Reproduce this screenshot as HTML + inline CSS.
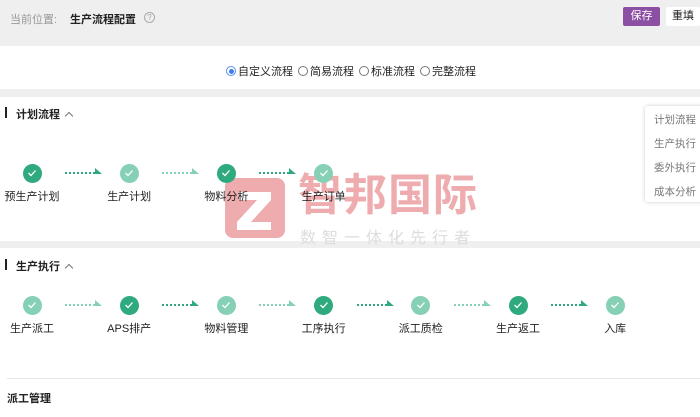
<!DOCTYPE html><html><head><meta charset="utf-8"><style>
*{margin:0;padding:0;box-sizing:border-box}
body{width:700px;height:417px;overflow:hidden;background:#fff;font-family:"Liberation Sans","Noto Sans CJK SC",sans-serif;font-size:11px;color:#222;position:relative}
.a{position:absolute}
.c{position:absolute;width:19px;height:19px;border-radius:50%;display:flex;align-items:center;justify-content:center}
.d{background:#2fa97e}.l{background:#86d0b6}
.lab{position:absolute;width:90px;text-align:center;font-size:11px;color:#222}
.ar{position:absolute;height:2px;width:30px;border-top:2px dotted}
.ah{position:absolute;width:0;height:0;border-left:7px solid;border-top:6px solid transparent}
.m{position:absolute;left:654px;font-size:10.5px;color:#777}
.chev{display:inline-block;width:6px;height:6px;border-left:1.2px solid #777;border-top:1.2px solid #777;transform:rotate(45deg);margin-left:6px;position:relative;top:1px}
</style></head><body>
<div class="a" style="left:0;top:0;width:700px;height:46px;background:#efefef"></div>
<div class="a" style="left:10px;top:11px;font-size:11px;color:#999">当前位置:</div>
<div class="a" style="left:70px;top:11px;font-size:11px;font-weight:bold;color:#222">生产流程配置</div>
<div class="a" style="left:144px;top:12px;width:11px;height:11px;border:1px solid #aaa;border-radius:50%;font-size:8px;color:#aaa;text-align:center;line-height:9px">?</div>
<div class="a" style="left:623px;top:7px;width:37px;height:19px;background:#8b4fa3;border-radius:2px;color:#fff;font-size:11px;text-align:center;line-height:19px">保存</div>
<div class="a" style="left:666px;top:7px;width:34px;height:19px;background:#fff;border-radius:2px;color:#222;font-size:11px;text-align:center;line-height:19px">重填</div>
<div class="a" style="left:0;top:89px;width:700px;height:8px;background:#efefef"></div>
<div class="a" style="left:226px;top:63px;font-size:11px;color:#222;display:flex;align-items:center;gap:0">
<span style="width:10px;height:10px;border-radius:50%;border:1px solid #5b8def;display:inline-block;position:relative;margin-right:2px"><span style="position:absolute;left:1.5px;top:1.5px;width:5px;height:5px;border-radius:50%;background:#3f7cf0"></span></span>自定义流程
<span style="width:10px;height:10px;border-radius:50%;border:1px solid #777;display:inline-block;margin:0 2px 0 5px"></span>简易流程
<span style="width:10px;height:10px;border-radius:50%;border:1px solid #777;display:inline-block;margin:0 2px 0 5px"></span>标准流程
<span style="width:10px;height:10px;border-radius:50%;border:1px solid #777;display:inline-block;margin:0 2px 0 5px"></span>完整流程</div>
<div class="a" style="left:5px;top:107px;width:2px;height:11px;background:#222"></div>
<div class="a" style="left:16px;top:106px;font-weight:bold">计划流程<span class="chev"></span></div>
<div class="a" style="left:0;top:241px;width:700px;height:7px;background:#efefef"></div>
<div class="a" style="left:5px;top:259px;width:2px;height:11px;background:#222"></div>
<div class="a" style="left:16px;top:258px;font-weight:bold">生产执行<span class="chev"></span></div>
<div class="a" style="left:7px;top:378px;width:693px;height:1px;background:#e6e6e6"></div>
<div class="a" style="left:7px;top:390px;font-weight:bold">派工管理</div>
<!-- watermark -->
<div class="a" style="left:225px;top:178px;width:60px;height:60px;background:#eeacaf;border-radius:8px"></div>
<svg class="a" style="left:225px;top:178px" width="60" height="60"><path d="M14 14h32v8L26 44h20v8H12v-8l20-22H14z" fill="#fff"/></svg>
<div class="a" style="left:298px;top:171px;font-size:44px;color:#eeacaf;letter-spacing:1px;font-weight:bold;line-height:50px">智邦国际</div>
<div class="a" style="left:300px;top:224px;font-size:16px;color:#ddd;letter-spacing:6px">数智一体化先行者</div>
<div id="r"></div>
<div class="a" style="left:645px;top:106px;width:60px;height:96px;background:#fff;box-shadow:0 0 4px rgba(0,0,0,.2);border-radius:3px"></div>
<div class="m" style="top:112px">计划流程</div><div class="m" style="top:136px">生产执行</div><div class="m" style="top:160px">委外执行</div><div class="m" style="top:184px">成本分析</div>
<script>
var ck='<svg width="10" height="8" viewBox="0 0 10 8"><path d="M1.5 4l2.5 2.5 4.5-5" fill="none" stroke="#fff" stroke-width="1.3"/></svg>';
function row(y,names,types){var h='';names.forEach(function(n,i){var x=32+i*97.2;var dk=types[i]=='d';h+='<div class="c '+types[i]+'" style="left:'+(x-9.5)+'px;top:'+(y-9.5)+'px">'+ck+'</div>';h+='<div class="lab" style="left:'+(x-45)+'px;top:'+(y+15)+'px">'+n+'</div>';if(i<names.length-1){var col=dk?'#2fa97e':'#86d0b6';h+='<div class="ar" style="left:'+(x+33)+'px;top:'+(y-1)+'px;border-color:'+col+'"></div><div class="ah" style="left:'+(x+63)+'px;top:'+(y-5)+'px;border-left-color:'+col+'"></div>';}});return h;}
document.getElementById('r').innerHTML=row(173,['预生产计划','生产计划','物料分析','生产订单'],['d','l','d','l'])+row(305,['生产派工','APS排产','物料管理','工序执行','派工质检','生产返工','入库'],['l','d','l','d','l','d','l']);
</script>
</body></html>
